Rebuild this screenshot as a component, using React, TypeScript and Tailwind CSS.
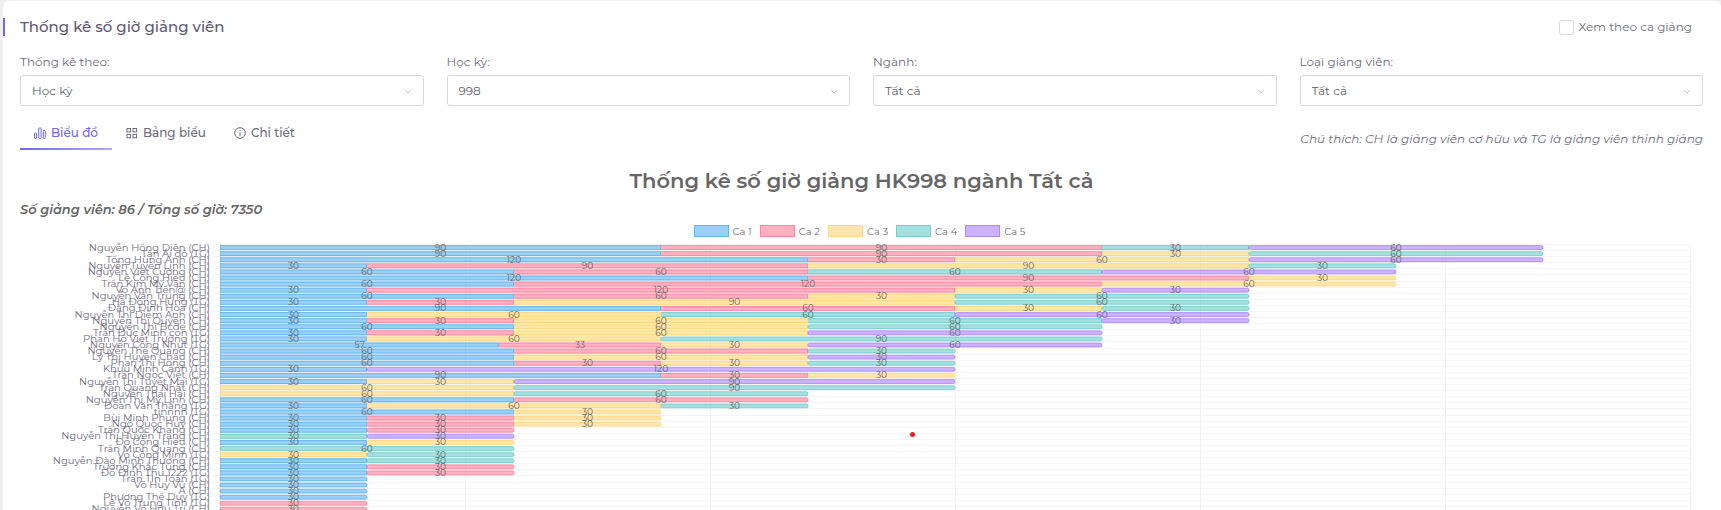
import React from "react";

const SHIFTS = [
  { label: "Ca 1", color: "#36a2eb" },
  { label: "Ca 2", color: "#ff6384" },
  { label: "Ca 3", color: "#ffcd56" },
  { label: "Ca 4", color: "#4bc0c0" },
  { label: "Ca 5", color: "#9966ff" },
];

/* name, then [shift, hours] pairs in stacking order */
type Row = [string, ...[number, number][]];

const ROWS: Row[] = [
  ["Nguyễn Hồng Diên (CH)", [1, 90], [2, 90], [4, 30], [5, 60]],
  ["Tân Ái đô (TG)", [1, 90], [2, 90], [3, 30], [4, 60]],
  ["Tống Hùng Anh (CH)", [1, 120], [2, 30], [3, 60], [5, 60]],
  ["Nguyễn Tuyên Linh (CH)", [1, 30], [2, 90], [3, 90], [4, 30]],
  ["Nguyễn Viết Cường (CH)", [1, 60], [2, 60], [4, 60], [5, 60]],
  ["Lê Công Hiếu (CH)", [1, 120], [2, 90], [3, 30]],
  ["Trần Kim Mỹ Vân (CH)", [1, 60], [2, 120], [3, 60]],
  ["Võ Anh Tiến@ (CH)", [1, 30], [2, 120], [3, 30], [5, 30]],
  ["Nguyễn Văn Trung (CH)", [1, 60], [2, 60], [3, 30], [4, 60]],
  ["Hà Đông Hưng (TG)", [1, 30], [2, 30], [3, 90], [4, 60]],
  ["Đặng Đình Hòa (CH)", [1, 90], [2, 60], [3, 30], [4, 30]],
  ["Nguyễn Thị Diễm Anh (CH)", [1, 30], [3, 60], [4, 60], [5, 60]],
  ["Nguyễn Thị Quyên (CH)", [1, 30], [2, 30], [3, 60], [4, 60], [5, 30]],
  ["Nguyễn Thị Bcde (CH)", [1, 60], [3, 60], [4, 60]],
  ["Trần Đức Minh con (TG)", [1, 30], [2, 30], [3, 60], [5, 60]],
  ["Phan Hồ Viết Trường (TG)", [1, 30], [3, 60], [4, 90]],
  ["Nguyễn Công Nhựt (TG)", [1, 57], [2, 33], [3, 30], [5, 60]],
  ["Nguyễn Thế Quang (CH)", [1, 60], [2, 60], [4, 30]],
  ["Lý Thị Huyền Châu (CH)", [1, 60], [3, 60], [5, 30]],
  ["Phan Thị Hồng (CH)", [1, 60], [2, 30], [3, 30], [4, 30]],
  ["Khưu Minh Cảnh (TG)", [1, 30], [5, 120]],
  ["Trần Ngọc Việt (CH)", [1, 90], [2, 30], [3, 30]],
  ["Nguyễn Thị Tuyết Mai (TG)", [1, 30], [3, 30], [5, 90]],
  ["Trần Quang Nhật (CH)", [3, 60], [4, 90]],
  ["Nguyễn Thái Hải (CH)", [3, 60], [4, 60]],
  ["Nguyễn Thị Mỹ Linh (CH)", [1, 60], [2, 60]],
  ["Đoàn Văn Thắng (TG)", [1, 30], [3, 60], [4, 30]],
  ["tinnnn (TG)", [1, 60], [3, 30]],
  ["Bùi Minh Phụng (CH)", [1, 30], [2, 30], [3, 30]],
  ["Ngô Quốc Huy (CH)", [1, 30], [2, 30], [3, 30]],
  ["Trần Quốc Khang (CH)", [1, 30], [2, 30]],
  ["Nguyễn Thị Huyền Trang (CH)", [4, 30], [5, 30]],
  ["Đỗ Công Hiếu (CH)", [1, 30], [3, 30]],
  ["Trần Minh Quang (CH)", [4, 60]],
  ["Võ Công Minh (TG)", [3, 30], [4, 30]],
  ["Nguyễn Đào Minh Thương (CH)", [1, 30], [4, 30]],
  ["Trương Khắc Tùng (CH)", [1, 30], [2, 30]],
  ["Đỗ Đình Thu 1222 (TG)", [1, 30], [2, 30]],
  ["Trần TIn Toàn (TG)", [1, 30]],
  ["Võ Huy Vũ (CH)", [1, 30]],
  ["A (CH)", [1, 30]],
  ["Phương Thế Duy (TG)", [1, 30]],
  ["Lê Võ Trung Tính (TG)", [2, 30]],
  ["Nguyễn Võ Hữu Trí (CH)", [2, 30]],
];

const PITCH = 6.09;
const BAR = 4.9;
const MAX = 300;
const HEIGHT = Math.ceil(ROWS.length * PITCH) + 2;
const pct = (v: number) => `${(v / MAX) * 100}%`;
const centre = (i: number) => 0.5 + (i + 0.5) * PITCH;

function ChevronIcon() {
  return (
    <svg className="pointer-events-none absolute right-3 top-3 h-2 w-2" viewBox="0 0 8 8" fill="none" stroke="#c0c4cc" aria-hidden="true">
      <path d="M1 2.8 4 6.1 7 2.8" />
    </svg>
  );
}

function BarsIcon() {
  return (
    <svg className="h-3 w-3" viewBox="0 0 12 12" fill="none" stroke="currentColor" aria-hidden="true">
      <rect x="0.5" y="6" width="2" height="5.5" rx="0.6" />
      <rect x="4.7" y="1" width="2.4" height="10.5" rx="0.6" />
      <rect x="9.3" y="3.5" width="2" height="8" rx="0.6" />
    </svg>
  );
}

function GridIcon() {
  return (
    <svg className="h-3 w-3" viewBox="0 0 12 12" fill="none" stroke="currentColor" aria-hidden="true">
      <rect x="1" y="1.5" width="3.6" height="3.4" />
      <rect x="7" y="1.5" width="3.6" height="3.4" />
      <rect x="1" y="7.4" width="3.6" height="3.4" />
      <rect x="7" y="7.4" width="3.6" height="3.4" />
    </svg>
  );
}

function InfoIcon() {
  return (
    <svg className="h-3 w-3" viewBox="0 0 12 12" fill="none" stroke="currentColor" aria-hidden="true">
      <circle cx="6" cy="6" r="5.3" />
      <path d="M6 5.3v3.6M6 3v1.2" />
    </svg>
  );
}

function Field({ id, label, value }: { id: string; label: string; value: string }) {
  return (
    <div className="flex flex-col gap-1">
      <label htmlFor={id} className="text-xs leading-[18px] text-[#6e6b7b]">
        {label}
      </label>
      <div className="relative">
        <select id={id} className="h-[31px] w-full appearance-none rounded-[3px] border border-[#d8d6de] bg-white px-[11px] text-xs text-[#606266] outline-none">
          <option>{value}</option>
        </select>
        <ChevronIcon />
      </div>
    </div>
  );
}

function Tab({ icon, label, active }: { icon: React.ReactNode; label: string; active?: boolean }) {
  return (
    <button
      type="button"
      role="tab"
      aria-selected={!!active}
      className={
        active
          ? "flex h-8 flex-col text-[#7367f0]"
          : "flex h-8 flex-col text-[#6e6b7b]"
      }
    >
      <span className="flex h-[30px] items-center gap-[5px] px-[14px] text-xs font-medium">
        {icon}
        {label}
      </span>
      {active && <span className="h-0.5 w-full bg-linear-to-r from-[#7367f0] to-[#b0a8f7]" />}
    </button>
  );
}

function NameAxis() {
  return (
    <svg className="w-[200px] shrink-0 overflow-visible text-[10px]" height={HEIGHT} fill="#6e6b7b">
      {ROWS.map(([name], i) => (
        <text key={name} x="190" y={Math.round(centre(i)) + 3} textAnchor="end">
          {name}
        </text>
      ))}
      {ROWS.map(([name], i) => (
        <rect key={name} x="193" y={Math.round(i * PITCH)} width="8" height="1" fill="#f2f2f2" />
      ))}
    </svg>
  );
}

function Plot() {
  return (
    <svg className="min-w-0 flex-1 overflow-visible text-[9px]" height={HEIGHT}>
      <g fill="#f4f4f4">
        {ROWS.map(([name], i) => (
          <rect key={name} x="0" y={Math.round(i * PITCH)} width="100%" height="1" />
        ))}
        {[0, 50, 100, 150, 200, 250, 300].map((v) => (
          <rect key={v} x={pct(v)} y="0" width="1" height="100%" fill={v ? "#f0f0f0" : "#dcdcdc"} />
        ))}
      </g>
      {ROWS.map(([name, ...segments], i) => {
        const top = centre(i) - BAR / 2;
        let start = 0;
        return (
          <g key={name}>
            {segments.map(([shift, hours], k) => {
              const color = SHIFTS[shift - 1].color;
              const from = start;
              start += hours;
              if (k === segments.length - 1) {
                return (
                  <rect
                    key={shift}
                    x={pct(from)}
                    y={top + 0.5}
                    width={pct(hours)}
                    height={BAR - 1}
                    rx="1.6"
                    fill={color}
                    fillOpacity="0.5"
                    stroke={color}
                    strokeOpacity="0.6"
                  />
                );
              }
              return (
                <g key={shift} fill={color}>
                  <rect x={pct(from)} y={top} width={pct(hours)} height={BAR} fillOpacity="0.5" />
                  <rect x={pct(from)} y={top} width={pct(hours)} height="1" fillOpacity="0.5" />
                  <rect x={pct(from)} y={top + BAR - 1} width={pct(hours)} height="1" fillOpacity="0.5" />
                  <svg x={pct(start)} y={top + 1} width="1" height={BAR - 2} className="overflow-visible">
                    <rect x="-1" width="1" height={BAR - 2} fillOpacity="0.5" />
                  </svg>
                </g>
              );
            })}
          </g>
        );
      })}
      <g fill="#666666" textAnchor="middle">
        {ROWS.map(([name, ...segments], i) => {
          let start = 0;
          return segments.map(([shift, hours]) => {
            const mid = start + hours / 2;
            start += hours;
            return (
              <text key={name + shift} x={pct(mid)} y={Math.round(centre(i)) + 3}>
                {hours}
              </text>
            );
          });
        })}
      </g>
    </svg>
  );
}

export default function App() {
  return (
    <div className="h-screen overflow-hidden bg-[#efeff0] pl-[3px] pt-px font-[Montserrat,Inter,sans-serif]">
      <main className="relative flex min-h-full flex-col rounded-t-md bg-white pr-[18px] pl-[17px]">
        <header className="flex h-[52px] items-center justify-between">
          <span className="absolute left-0 h-[18px] w-0.5 bg-[#7367f0]" />
          <h1 className="text-[15px] font-medium text-[#5e5873]">Thống kê số giờ giảng viên</h1>
          <label className="mr-[11px] flex items-center gap-[5px] text-xs text-[#6e6b7b]">
            <input type="checkbox" className="h-[15px] w-[15px] appearance-none rounded-[3px] border border-[#d8d6de] bg-white" />
            Xem theo ca giảng
          </label>
        </header>

        <section className="grid grid-cols-4 gap-[23px]">
          <Field id="group" label="Thống kê theo:" value="Học kỳ" />
          <Field id="term" label="Học kỳ:" value="998" />
          <Field id="major" label="Ngành:" value="Tất cả" />
          <Field id="type" label="Loại giảng viên:" value="Tất cả" />
        </section>

        <div className="mt-3 flex justify-between">
          <div role="tablist" className="flex">
            <Tab active icon={<BarsIcon />} label="Biểu đồ" />
            <Tab icon={<GridIcon />} label="Bảng biểu" />
            <Tab icon={<InfoIcon />} label="Chi tiết" />
          </div>
          <p className="pt-[13px] text-xs italic text-[#6e6b7b]">Chú thích: CH là giảng viên cơ hữu và TG là giảng viên thỉnh giảng</p>
        </div>

        <h2 className="mt-[17px] text-center text-[21px] leading-7 font-semibold text-[#666]">Thống kê số giờ giảng HK998 ngành Tất cả</h2>
        <p className="mt-[5px] text-[13px] leading-[18px] font-semibold text-[#666] italic">Số giảng viên: 86 / Tổng số giờ: 7350</p>

        <ul className="mt-[7px] flex h-3 items-center justify-center gap-2 pr-1 text-[10px] text-[#6e6b7b]">
          {SHIFTS.map((s) => (
            <li key={s.label} className="flex items-center gap-1">
              <svg className="h-3 w-[35px]" aria-hidden="true">
                <rect x="0.5" y="0.5" width="34" height="11" fill={s.color} fillOpacity="0.5" stroke={s.color} strokeOpacity="0.7" />
              </svg>
              {s.label}
            </li>
          ))}
        </ul>

        <div className="relative mt-[7px] mr-[13px] flex">
          <NameAxis />
          <Plot />
          <span className="absolute top-[188px] left-[890px] h-[5px] w-[5px] rounded-full bg-[#e81e1e]" />
        </div>
      </main>
    </div>
  );
}
